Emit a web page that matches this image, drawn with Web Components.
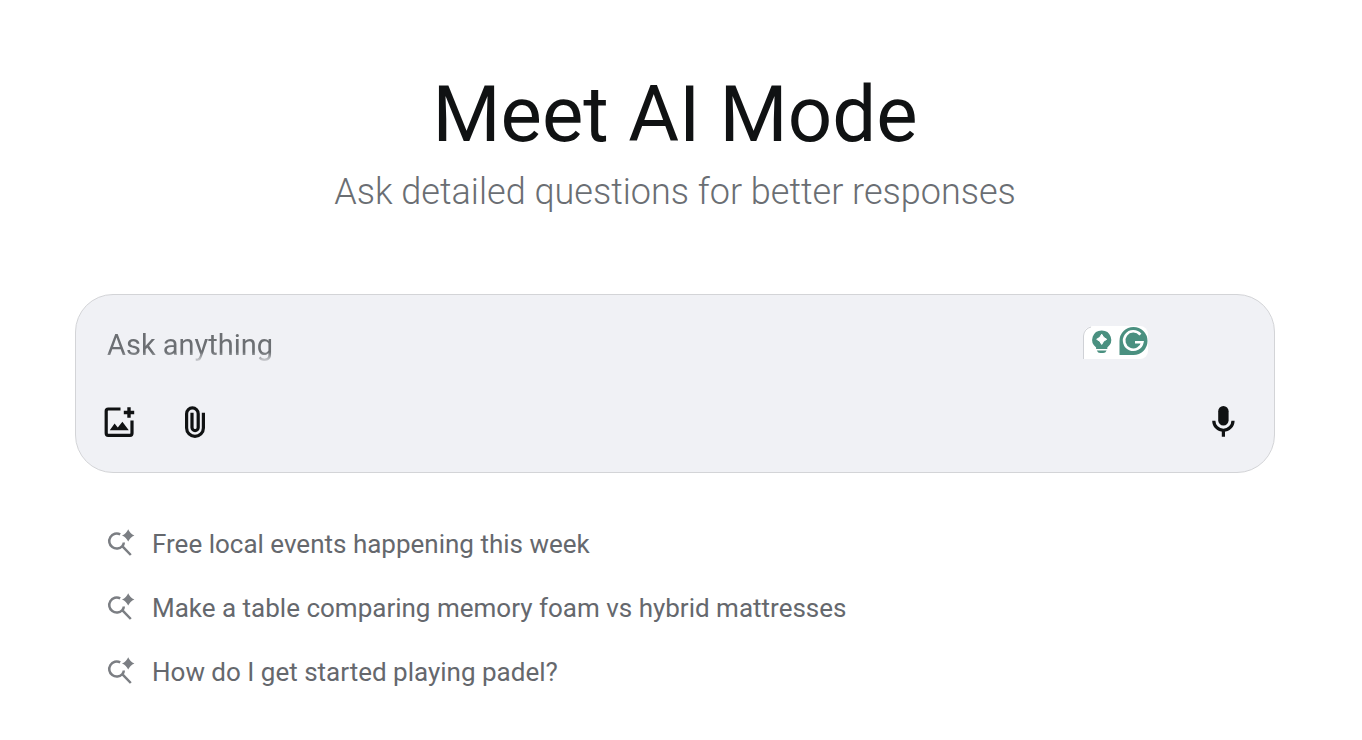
<!DOCTYPE html>
<html lang="en">
<head>
<meta charset="utf-8">
<meta name="viewport" content="width=device-width, initial-scale=1">
<title>AI Mode</title>
<style>
  body { margin: 0; background: #fff; color: #101213; font-family: Roboto, "Liberation Sans", sans-serif; }
</style>
</head>
<body>
<ai-page>
  <ai-hero slot="hero">
    <span slot="title">Meet AI Mode</span>
    <span slot="subtitle">Ask detailed questions for better responses</span>
  </ai-hero>
  <ai-prompt placeholder="Ask anything"></ai-prompt>
  <ai-suggestions>
    <ai-suggestion>Free local events happening this week</ai-suggestion>
    <ai-suggestion>Make a table comparing memory foam vs hybrid mattresses</ai-suggestion>
    <ai-suggestion>How do I get started playing padel?</ai-suggestion>
  </ai-suggestions>
</ai-page>

<script>
(function () {
  // icons by name: viewBox, then the shapes
  var ICONS = {
    image: ['0 0 40 40', '<path d="M21.5 7H9.2a2 2 0 0 0-2 2v22.3a2 2 0 0 0 2 2H31a2 2 0 0 0 2-2V18.5" fill="none" stroke="currentColor" stroke-width="3.2"/><path d="M30 5.3v10.4M24.8 10.5h10.4" stroke="currentColor" stroke-width="3.4"/><path d="M10.8 28.3 15.6 21.6l3.2 3.8 4.6-5.6 6.4 8.5z" fill="currentColor"/>'],
    clip: ['0 0 40 40', '<path d="M28.4 10.7v15.3a8.4 8.4 0 0 1-16.8 0V11.7a5.8 5.8 0 0 1 11.6 0v13.8a3.1 3.1 0 0 1-6.2 0V10.7" fill="none" stroke="currentColor" stroke-width="3.2"/>'],
    mic: ['0 0 40 40', '<rect x="15.2" y="4" width="10.4" height="19.5" rx="5.2" fill="currentColor"/><path d="M10.8 18.7a9.6 9.6 0 0 0 19.2 0M20.4 28v6.8" fill="none" stroke="currentColor" stroke-width="3.2"/>'],
    spark: ['0 0 28 28', '<path d="M13.2 4.4A7.5 7.5 0 1 0 15.4 16Q16.8 14.6 16.8 12.6M15 15.8l8.8 9.2" fill="none" stroke="currentColor" stroke-width="2.5"/><path d="M21.2 -.8Q23 3.6 27.4 5.4 23 7.2 21.2 11.6 19.4 7.2 15 5.4 19.4 3.6 21.2-.8z" fill="currentColor"/>']
  };

  function icon(name) {
    return '<svg viewBox="' + ICONS[name][0] + '" aria-hidden="true">' + ICONS[name][1] + '</svg>';
  }

  function define(name, render) {
    customElements.define(name, class extends HTMLElement {
      connectedCallback() {
        if (this.shadowRoot) return;
        this.attachShadow({ mode: 'open' }).innerHTML = render(this);
      }
    });
  }

  define('ai-page', function () {
    return `<style>
      :host { display: block; padding: 72px 87px 0 75px; }
      main { display: flex; flex-direction: column; }
    </style>
    <main><slot name="hero"></slot><slot></slot></main>`;
  });

  define('ai-hero', function () {
    return `<style>
      :host { display: block; text-align: center; }
      h1, p { margin: 0; font-weight: 400; }
      h1 { font-size: 78px; line-height: 86px; }
      p { margin-top: 12px; font-size: 36px; font-weight: 300; line-height: 44px; color: #6a6e73; }
    </style>
    <h1><slot name="title"></slot></h1>
    <p><slot name="subtitle"></slot></p>`;
  });

  define('ai-icon-button', function (el) {
    return `<style>
      :host { display: block; }
      button { display: block; padding: 0; border: 0; background: none; color: inherit; cursor: pointer; }
      svg { display: block; width: 40px; height: 40px; }
    </style>
    <button type="button" aria-label="${el.getAttribute('label')}">${icon(el.getAttribute('icon'))}</button>`;
  });

  // writing assistant badge: suggestion bulb and round G mark
  define('assist-badge', function () {
    return `<style>
      :host { display: block; }
      svg { display: block; width: 65px; height: 34px; }
    </style>
    <svg viewBox="0 0 65 34" role="img" aria-label="Writing assistant">
      <path d="M10 0H57a8 8 0 0 1 8 8V25a8 8 0 0 1-8 8H0V10A10 10 0 0 1 10 0z" fill="#fff"/>
      <path d="M.5 33V10A9.5 9.5 0 0 1 8 1" fill="none" stroke="#cfd1d6"/>
      <path d="M18.7 4.4a9.4 9.4 0 0 1 5.6 17V23h-11.2V21.4A9.4 9.4 0 0 1 18.7 4.4z" fill="#4a9080"/>
      <path d="M13.8 24.4h9.8q-1 2.6-3.4 2.6h-3q-2.4 0-3.4-2.6z" fill="#4a9080"/>
      <path d="M18.7 8.2q1.5 3.9 5 5.1-3.5 1.2-5 5.1-1.5-3.9-5-5.1 3.5-1.2 5-5.1z" fill="#fff" stroke="#fff"/>
      <path d="M50.5 1A14 14 0 1 1 50.5 29H36.5V15A14 14 0 0 1 50.5 1z" fill="#4a9080"/>
      <path d="M57.4 8.6A9.2 9.2 0 1 0 59.4 16.2H52" fill="none" stroke="#fff" stroke-width="2.6"/>
    </svg>`;
  });

  define('ai-prompt', function (el) {
    return `<style>
      :host { display: block; margin-top: 80px; }
      form { padding: 31px 31px 30px; border: 1px solid #d3d4d7; border-radius: 38px; background: #f0f1f5; }
      .field { display: flex; align-items: flex-start; }
      textarea {
        flex: 1; min-width: 0; height: 36px; padding: 0; border: 0; outline: 0; resize: none; overflow: hidden;
        background: none; color: #101213; font: 29px/38px Roboto, "Liberation Sans", sans-serif;
        -webkit-mask-image: linear-gradient(#000 26px, transparent 38px); mask-image: linear-gradient(#000 26px, transparent 38px);
      }
      textarea::placeholder { color: #6c6f73; opacity: 1; }
      assist-badge { margin-right: 95px; }
      .tools { display: flex; align-items: center; gap: 36px; margin: 40px 0 0 -8px; }
      .mic { margin-left: auto; }
    </style>
    <form>
      <div class="field">
        <textarea rows="1" aria-label="${el.getAttribute('placeholder')}" placeholder="${el.getAttribute('placeholder')}"></textarea>
        <assist-badge></assist-badge>
      </div>
      <div class="tools">
        <ai-icon-button icon="image" label="Add image"></ai-icon-button>
        <ai-icon-button icon="clip" label="Attach file"></ai-icon-button>
        <ai-icon-button class="mic" icon="mic" label="Voice search"></ai-icon-button>
      </div>
    </form>`;
  });

  define('ai-suggestions', function () {
    return `<style>
      :host { display: block; margin: 39px 0 0 32px; }
      nav { display: flex; flex-direction: column; align-items: flex-start; }
    </style>
    <nav aria-label="Suggestions"><slot></slot></nav>`;
  });

  define('ai-suggestion', function () {
    return `<style>
      :host { display: block; }
      a { display: flex; align-items: center; gap: 17px; height: 64px; color: #65686d; font-size: 26px; line-height: 32px; text-decoration: none; }
      svg { flex: none; width: 28px; height: 28px; overflow: visible; color: #7b7e83; }
    </style>
    <a href="#">${icon('spark')}<span><slot></slot></span></a>`;
  });
})();
</script>
</body>
</html>
